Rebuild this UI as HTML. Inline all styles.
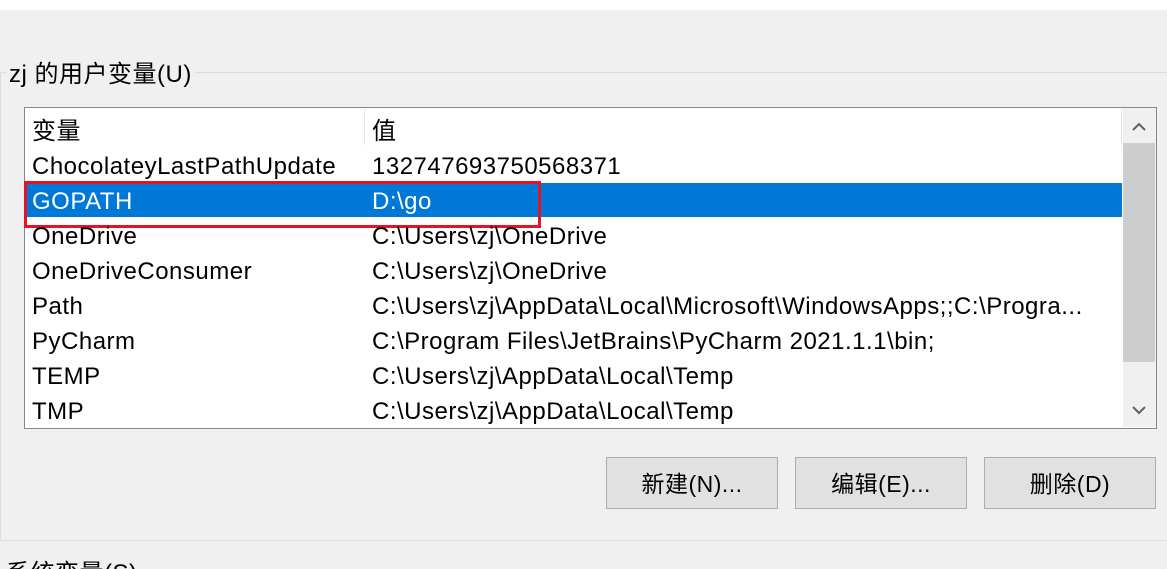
<!DOCTYPE html><html><head><meta charset="utf-8"><style>
html,body{margin:0;width:1167px;height:569px;overflow:hidden}
body{background:#f0f0f0;position:relative;font-family:"Liberation Sans","Noto Sans CJK SC",sans-serif;font-size:24px;letter-spacing:0.5px;color:#000}
.a{position:absolute}
.t{position:absolute;white-space:nowrap;line-height:35px}
.btn{position:absolute;top:457px;width:170px;height:50px;background:#e1e1e1;border:1px solid #adadad;text-align:center;line-height:52px;font-size:23px}
</style></head><body>
<div class="a" style="left:0;top:0;width:1167px;height:10px;background:#fff"></div>
<div class="a" style="left:0;top:72px;width:1167px;height:467px;border-top:1px solid #dcdcdc;border-left:1px solid #dcdcdc;border-bottom:1px solid #dcdcdc"></div>
<div class="t" style="left:6px;top:57px;background:#f0f0f0;padding:0 3px">zj 的用户变量(U)</div>
<div class="a" style="left:24px;top:107px;width:1131px;height:320px;background:#fff;border:1px solid #828790"></div>
<div class="a" style="left:364px;top:109px;width:1px;height:36px;background:#e5e5e5"></div>
<div class="a" style="left:1121px;top:109px;width:1px;height:36px;background:#e5e5e5"></div>
<div class="a" style="left:1123px;top:108px;width:33px;height:319px;background:#f0f0f0"></div>
<div class="a" style="left:1123px;top:143px;width:32px;height:219px;background:#cdcdcd"></div>
<svg class="a" style="left:1130px;top:120px" width="18" height="14"><path d="M3 10 L9 4 L15 10" stroke="#606060" stroke-width="2" fill="none"/></svg>
<svg class="a" style="left:1130px;top:403px" width="18" height="14"><path d="M3 4 L9 10 L15 4" stroke="#606060" stroke-width="2" fill="none"/></svg>
<div class="a" style="left:25px;top:183px;width:1097px;height:34px;background:#0078d7"></div>
<div class="a" style="left:24px;top:181px;width:511px;height:41px;border:3px solid #e81123"></div>
<div class="t" style="left:32px;top:114px">变量</div><div class="t" style="left:372px;top:114px">值</div>
<div class="t" style="left:32px;top:149px">ChocolateyLastPathUpdate</div><div class="t" style="left:372px;top:149px">132747693750568371</div>
<div class="t" style="left:32px;top:184px;color:#fff">GOPATH</div><div class="t" style="left:372px;top:184px;color:#fff">D:\go</div>
<div class="t" style="left:32px;top:219px">OneDrive</div><div class="t" style="left:372px;top:219px">C:\Users\zj\OneDrive</div>
<div class="t" style="left:32px;top:254px">OneDriveConsumer</div><div class="t" style="left:372px;top:254px">C:\Users\zj\OneDrive</div>
<div class="t" style="left:32px;top:289px">Path</div><div class="t" style="left:372px;top:289px">C:\Users\zj\AppData\Local\Microsoft\WindowsApps;;C:\Progra...</div>
<div class="t" style="left:32px;top:324px">PyCharm</div><div class="t" style="left:372px;top:324px">C:\Program Files\JetBrains\PyCharm 2021.1.1\bin;</div>
<div class="t" style="left:32px;top:359px">TEMP</div><div class="t" style="left:372px;top:359px">C:\Users\zj\AppData\Local\Temp</div>
<div class="t" style="left:32px;top:394px">TMP</div><div class="t" style="left:372px;top:394px">C:\Users\zj\AppData\Local\Temp</div>
<div class="btn" style="left:606px">新建(N)...</div>
<div class="btn" style="left:795px">编辑(E)...</div>
<div class="btn" style="left:984px">删除(D)</div>
<div class="t" style="left:6px;top:556px">系统变量(S)</div>
</body></html>
